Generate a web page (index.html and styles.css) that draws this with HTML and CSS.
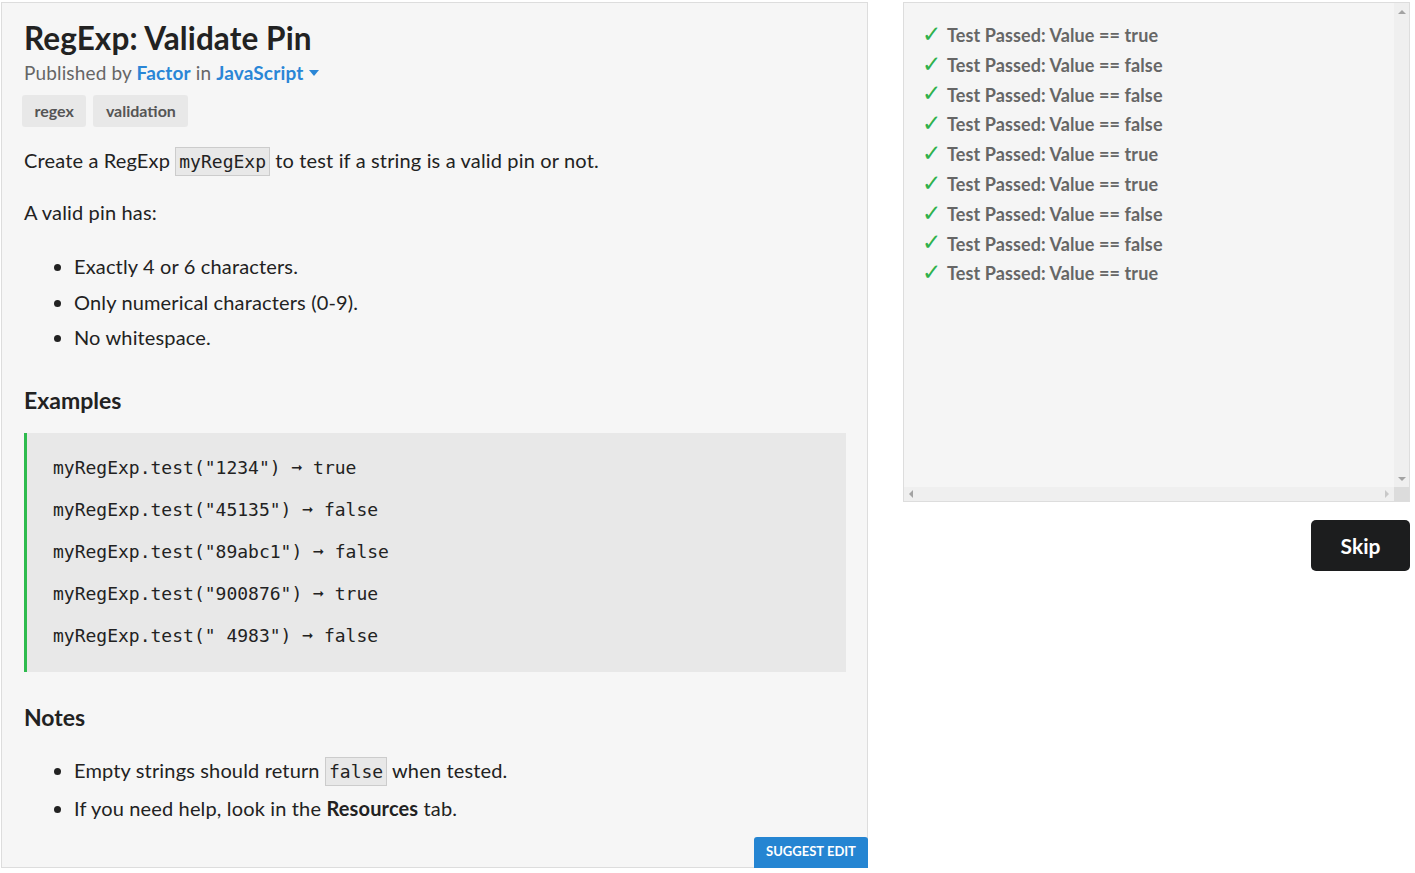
FILE: index.html
```html
<!DOCTYPE html>
<html>
<head>
<meta charset="utf-8">
<link rel="stylesheet" href="styles.css">
</head>
<body>
<div class="page">
  <main class="description">
    <h1 class="title">RegExp: Validate Pin</h1>
    <div class="meta">Published by <a class="link">Factor</a> in <a class="link">JavaScript</a> <span class="caret"></span></div>
    <div class="tags">
      <span class="tag">regex</span>
      <span class="tag">validation</span>
    </div>
    <p class="text">Create a RegExp <code class="inline">myRegExp</code> to test if a string is a valid pin or not.</p>
    <p class="text">A valid pin has:</p>
    <ul class="list">
      <li>Exactly 4 or 6 characters.</li>
      <li>Only numerical characters (0-9).</li>
      <li>No whitespace.</li>
    </ul>
    <h2 class="heading">Examples</h2>
    <blockquote class="examples">
      <p class="code-line">myRegExp.test("1234") ➞ true</p>
      <p class="code-line">myRegExp.test("45135") ➞ false</p>
      <p class="code-line">myRegExp.test("89abc1") ➞ false</p>
      <p class="code-line">myRegExp.test("900876") ➞ true</p>
      <p class="code-line">myRegExp.test(" 4983") ➞ false</p>
    </blockquote>
    <h2 class="heading notes-heading">Notes</h2>
    <ul class="list notes">
      <li>Empty strings should return <code class="inline">false</code> when tested.</li>
      <li>If you need help, look in the <strong>Resources</strong> tab.</li>
    </ul>
    <button class="suggest">SUGGEST EDIT</button>
  </main>
  <aside class="side">
    <div class="results">
      <div class="results-body">
        <div class="result"><span class="check">✓</span>Test Passed: Value == true</div>
        <div class="result"><span class="check">✓</span>Test Passed: Value == false</div>
        <div class="result"><span class="check">✓</span>Test Passed: Value == false</div>
        <div class="result"><span class="check">✓</span>Test Passed: Value == false</div>
        <div class="result"><span class="check">✓</span>Test Passed: Value == true</div>
        <div class="result"><span class="check">✓</span>Test Passed: Value == true</div>
        <div class="result"><span class="check">✓</span>Test Passed: Value == false</div>
        <div class="result"><span class="check">✓</span>Test Passed: Value == false</div>
        <div class="result"><span class="check">✓</span>Test Passed: Value == true</div>
      </div>
      <div class="vbar"><span class="arrow up"></span><span class="arrow down"></span></div>
      <div class="hbar"><span class="arrow left"></span><span class="arrow right"></span></div>
      <div class="corner"></div>
    </div>
    <button class="skip">Skip</button>
  </aside>
</div>
</body>
</html>
```
FILE: styles.css
```css
* { box-sizing: border-box; }
html, body { margin: 0; padding: 0; background: #fff; }
body { font-family: Lato, "Noto Sans", sans-serif; color: #222; }

.page {
  display: flex;
  align-items: flex-start;
  gap: 35px;
  padding: 2px 5px 0 1px;
}

.description {
  position: relative;
  width: 867px;
  height: 866px;
  flex: none;
  background: #f6f6f6;
  border: 1px solid #dddddd;
  padding: 16px 21px 0 22px;
}

.title {
  margin: 0;
  font-size: 31.5px;
  letter-spacing: 0.1px;
  font-weight: 700;
  line-height: 38px;
  color: #222;
}

.meta {
  margin-top: 2px;
  font-size: 19px;
  letter-spacing: 0.15px;
  line-height: 28px;
  color: #666;
}
.link { color: #2a86d6; font-weight: 700; text-decoration: none; }
.caret {
  display: inline-block;
  width: 0; height: 0;
  border-left: 5.5px solid transparent;
  border-right: 5.5px solid transparent;
  border-top: 6px solid #2a86d6;
  vertical-align: 4px;
  margin-left: 1px;
}

.tags { display: flex; gap: 7px; margin: 8px 0 0 -2px; }
.tag {
  background: #e8e8e8;
  color: #555;
  font-size: 16px;
  font-weight: 700;
  line-height: 32px;
  padding: 0 12.5px;
  border-radius: 3px;
}

.text {
  font-size: 20px;
  letter-spacing: 0.15px;
  line-height: 30px;
  margin: 18px 0 0;
}
.text + .text { margin-top: 22px; }

.inline {
  font-family: "DejaVu Sans Mono", monospace;
  font-size: 18px;
  line-height: 1;
  letter-spacing: 0;
  background: #e8e8e8;
  border: 1px solid #cccccc;
  padding: 3px 3px;
}

.list {
  font-size: 20px;
  letter-spacing: 0.15px;
  margin: 22px 0 0;
  padding-left: 50px;
}
.list li { line-height: 35.5px; }

.heading {
  font-size: 23px;
  font-weight: 700;
  margin: 28px 0 0;
  line-height: 32px;
}

.examples {
  margin: 17px 0 0;
  background: #e8e8e8;
  border-left: 3px solid #2ebb4e;
  padding: 14px 20px 12px 26px;
  height: 239px;
}
.code-line {
  margin: 0;
  font-family: "DejaVu Sans Mono", monospace;
  font-size: 18px;
  line-height: 42px;
  color: #222;
}

.notes-heading { margin-top: 29px; }
.notes { margin-top: 18px; }
.notes li { line-height: 38px; }
.notes strong { font-weight: 700; }

.suggest {
  position: absolute;
  right: -1px;
  bottom: -1px;
  width: 114px;
  height: 31px;
  border: none;
  border-radius: 3px 3px 0 0;
  background: #2585d2;
  color: #fff;
  font-family: Lato, sans-serif;
  font-weight: 700;
  font-size: 13px;
  padding: 0 0 3px;
}

.side {
  width: 507px;
  flex: none;
  display: flex;
  flex-direction: column;
  align-items: flex-end;
}

.results {
  width: 507px;
  height: 500px;
  border: 1px solid #dddddd;
  background: #f5f5f5;
  display: grid;
  grid-template-columns: 1fr 15px;
  grid-template-rows: 1fr 14px;
}
.results-body { padding: 18px 0 0 18px; }
.result {
  font-size: 18px;
  letter-spacing: 0.1px;
  font-weight: 700;
  color: #666;
  line-height: 29.8px;
  display: flex;
  align-items: center;
}
.check {
  color: #2fb14c;
  font-family: "DejaVu Sans", sans-serif;
  font-size: 23px;
  width: 25px;
  font-weight: 400;
  letter-spacing: 0;
  line-height: 20px;
  margin-top: -4px;
}

.vbar {
  background: #efefef;
  display: flex;
  flex-direction: column;
  justify-content: space-between;
  align-items: center;
  padding: 7px 0 6px;
}
.hbar {
  background: #efefef;
  display: flex;
  justify-content: space-between;
  align-items: center;
  padding: 0 5px 0 5px;
}
.corner { background: #dcdcdc; }
.arrow { width: 0; height: 0; display: block; }
.arrow.up { border-left: 4px solid transparent; border-right: 4px solid transparent; border-bottom: 4px solid #a3a3a3; }
.arrow.down { border-left: 4px solid transparent; border-right: 4px solid transparent; border-top: 4px solid #a3a3a3; }
.arrow.left { border-top: 4px solid transparent; border-bottom: 4px solid transparent; border-right: 4px solid #a3a3a3; }
.arrow.right { border-top: 4px solid transparent; border-bottom: 4px solid transparent; border-left: 4px solid #c8c8c8; }

.skip {
  margin-top: 18px;
  width: 99px;
  height: 51px;
  border: none;
  border-radius: 5px;
  background: #1c1d1e;
  color: #fff;
  font-family: Lato, sans-serif;
  font-weight: 700;
  font-size: 21px;
  padding: 0;
}
```
